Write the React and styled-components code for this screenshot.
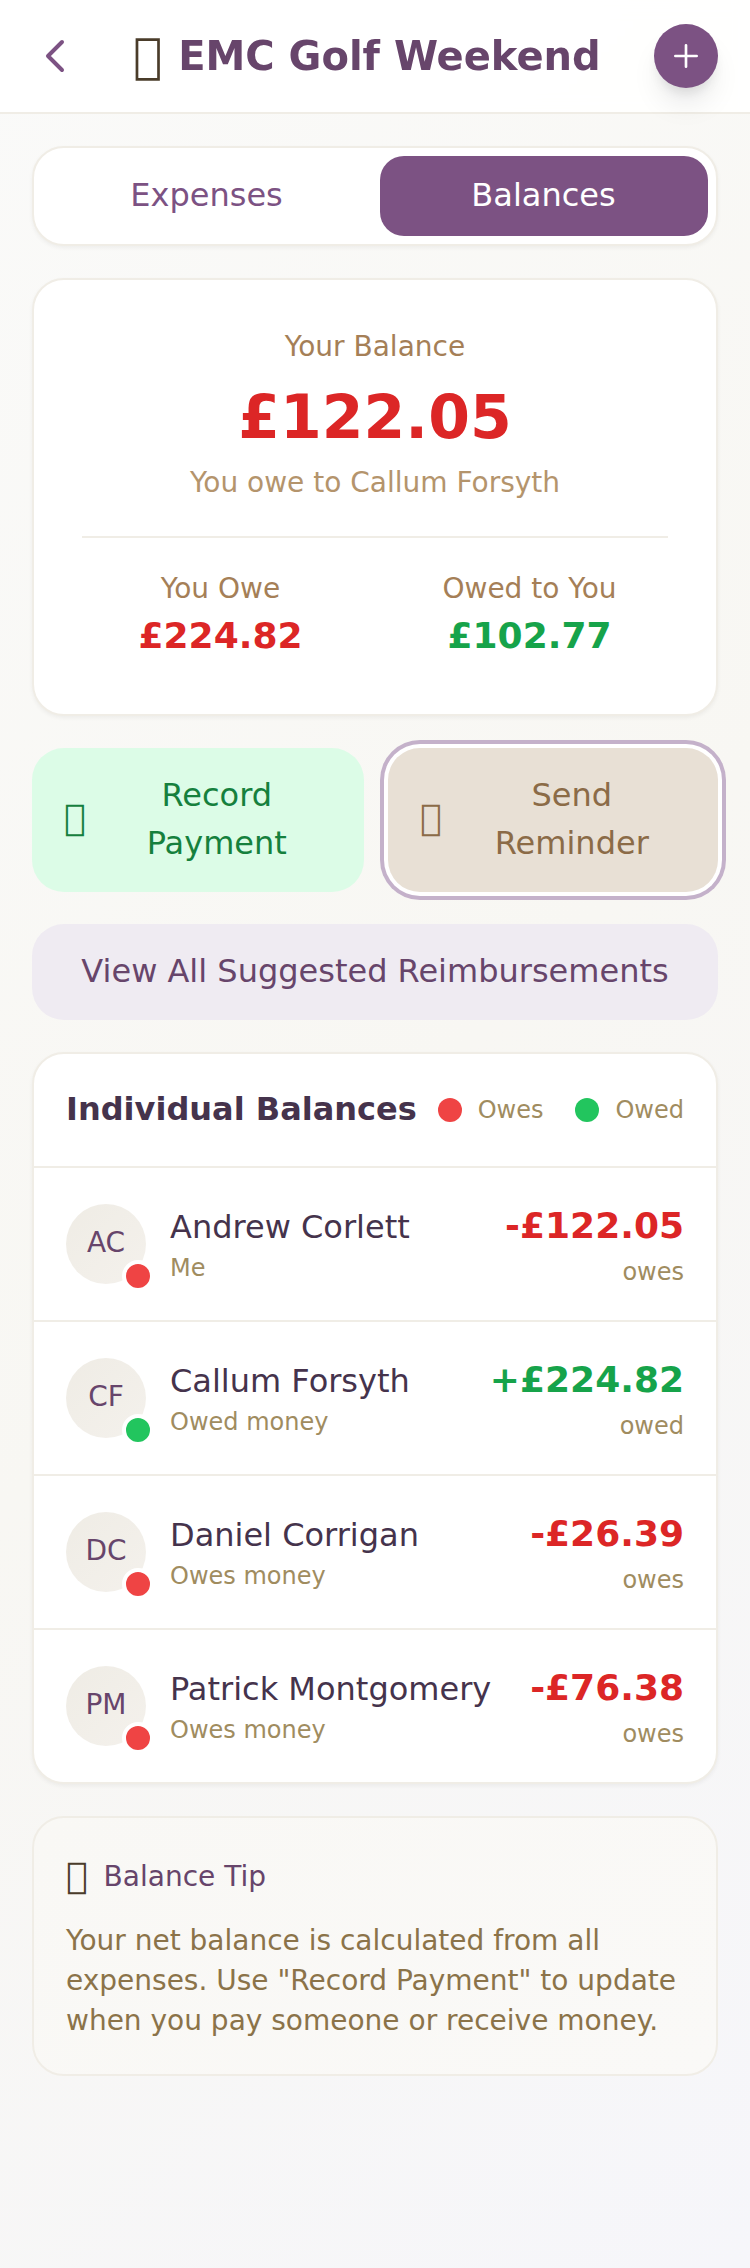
import React from "react";
import styled, { createGlobalStyle } from "styled-components";

const colors = {
  plum: "#7c5283",
  plumDeep: "#67456b",
  ink: "#45334c",
  tan: "#a57f57",
  tanLight: "#b4946c",
  olive: "#a08c5f",
  line: "#f0ede6",
  red: "#dc2626",
  green: "#16a34a",
  redDot: "#ef4444",
  greenDot: "#22c55e",
};

const GlobalStyle = createGlobalStyle`
  *, *::before, *::after { box-sizing: border-box; }
  body {
    margin: 0;
    font-family: "DejaVu Sans", sans-serif;
    color: #4a3c2a;
  }
  button { font: inherit; color: inherit; border: 0; margin: 0; cursor: pointer; }
  h1, h2, p { margin: 0; }
`;

const Screen = styled.div`
  min-height: 2268px;
  background: linear-gradient(135deg, #fafaf9 0%, #f8f7f3 50%, #f6f6fa 100%);
`;

const Header = styled.header`
  height: 114px;
  padding: 0 32px;
  display: flex;
  align-items: center;
  justify-content: space-between;
  background: rgba(255, 255, 255, 0.9);
  border-bottom: 2px solid ${colors.line};
  backdrop-filter: blur(8px);
`;

const BackButton = styled.button`
  display: flex;
  padding: 0;
  background: none;
  color: ${colors.plum};
`;

const AddButton = styled.button`
  width: 64px;
  height: 64px;
  padding: 0;
  border-radius: 50%;
  display: flex;
  align-items: center;
  justify-content: center;
  background: ${colors.plum};
  color: #fff;
  box-shadow: 0 20px 30px -6px rgba(0, 0, 0, 0.1), 0 8px 12px -4px rgba(0, 0, 0, 0.1);
`;

const TitleGroup = styled.div`
  display: flex;
  align-items: center;
  gap: 16px;
`;

const Title = styled.h1`
  font-size: 40px;
  line-height: 56px;
  font-weight: 700;
  color: ${colors.plumDeep};
`;

const BoxGlyph = styled.span`
  margin-bottom: ${(p) => p.$lift}px;
  font-size: ${(p) => p.$size}px;
  line-height: ${(p) => p.$line}px;
`;

const Content = styled.main`
  padding: 32px;
  display: flex;
  flex-direction: column;
  gap: 32px;
`;

const Card = styled.section`
  background: #fff;
  border: 2px solid ${colors.line};
  border-radius: 32px;
  box-shadow: 0 2px 4px rgba(0, 0, 0, 0.05);
`;

const Tabs = styled(Card).attrs({ as: "nav" })`
  padding: 8px;
  display: grid;
  grid-template-columns: 330px 328px;
  gap: 8px;
`;

const Tab = styled.button`
  height: 80px;
  padding: 0 1px 2px 0;
  border-radius: 24px;
  font-size: 32px;
  line-height: 48px;
  background: ${(p) => (p.$active ? colors.plum : "transparent")};
  color: ${(p) => (p.$active ? "#fff" : colors.plum)};
`;

const BalanceCard = styled(Card)`
  height: 438px;
  padding: 48px;
  text-align: center;
`;

const Caption = styled.p`
  font-size: 28px;
  line-height: 37px;
  color: ${(p) => (p.$light ? colors.tanLight : colors.tan)};
`;

const NetAmount = styled.p`
  margin: 16px 0 11px;
  font-size: 60px;
  line-height: 72px;
  font-weight: 700;
  color: ${colors.red};
`;

const Split = styled.div`
  margin-top: 35px;
  padding-top: 32px;
  border-top: 2px solid ${colors.line};
  display: grid;
  grid-template-columns: 1fr 1fr;
  gap: 32px;
`;

const SplitAmount = styled.p`
  margin-top: 6px;
  font-size: 36px;
  line-height: 45px;
  font-weight: 700;
  color: ${(p) => (p.$positive ? colors.green : colors.red)};
`;

const Actions = styled.div`
  display: grid;
  grid-template-columns: 332px 330px;
  gap: 24px;
`;

const ActionButton = styled.button`
  height: 144px;
  padding: 23px 32px 25px;
  border-radius: 32px;
  display: flex;
  align-items: center;
  gap: 16px;
  font-size: 32px;
  line-height: 48px;
  background: ${(p) => (p.$tone === "green" ? "#dcfce7" : "#e8e0d5")};
  color: ${(p) => (p.$tone === "green" ? "#15803d" : "#8b6b47")};
  box-shadow: ${(p) => (p.$focused ? "0 0 0 4px #fff, 0 0 0 8px #c4b1ca" : "none")};
`;

const ActionLabel = styled.span`
  flex: 1;
  text-align: center;
`;

const WideButton = styled.button`
  height: 96px;
  padding: 0 0 2px;
  border-radius: 32px;
  font-size: 32px;
  line-height: 48px;
  background: #efebf2;
  color: ${colors.plumDeep};
`;

const ListHeader = styled.div`
  height: 112px;
  padding: 0 32px;
  display: flex;
  align-items: center;
  justify-content: space-between;
`;

const ListTitle = styled.h2`
  padding-bottom: 2px;
  font-size: 32px;
  line-height: 48px;
  font-weight: 700;
  color: ${colors.ink};
`;

const Legend = styled.div`
  display: flex;
  gap: 32px;
`;

const LegendItem = styled.div`
  display: flex;
  align-items: center;
  gap: 16px;
  font-size: 24px;
  line-height: 28px;
  color: ${colors.olive};
`;

const Dot = styled.span`
  width: 24px;
  height: 24px;
  border-radius: 50%;
  background: ${(p) => (p.$positive ? colors.greenDot : colors.redDot)};
`;

const Row = styled.div`
  height: 154px;
  padding: 35px 32px 0;
  border-top: 2px solid ${colors.line};
  display: flex;
  align-items: flex-start;
`;

const Avatar = styled.div`
  position: relative;
  width: 80px;
  height: 80px;
  margin: 1px 24px 0 0;
  padding-bottom: 3px;
  border-radius: 50%;
  display: flex;
  align-items: center;
  justify-content: center;
  font-size: 28px;
  line-height: 33px;
  background: linear-gradient(135deg, #efece5, #f4f1ec);
  color: ${colors.plumDeep};
`;

const StatusDot = styled.span`
  position: absolute;
  right: -8px;
  bottom: -8px;
  width: 32px;
  height: 32px;
  border: 4px solid #fff;
  border-radius: 50%;
  background: ${(p) => (p.$positive ? colors.greenDot : colors.redDot)};
`;

const Person = styled.div`
  flex: 1;
`;

const Name = styled.p`
  font-size: 32px;
  line-height: 48px;
  color: ${colors.ink};
  white-space: nowrap;
`;

const Note = styled.p`
  font-size: 24px;
  line-height: 34px;
  color: ${colors.olive};
`;

const Figures = styled.div`
  text-align: right;
`;

const RowAmount = styled.p`
  margin-bottom: 7px;
  font-size: 36px;
  line-height: 45px;
  font-weight: 700;
  color: ${(p) => (p.$positive ? colors.green : colors.red)};
`;

const TipCard = styled.section`
  height: 260px;
  padding: 32px;
  border: 2px solid ${colors.line};
  border-radius: 32px;
  background: linear-gradient(135deg, #f9f8f5, #faf9f7);
`;

const TipHeading = styled.div`
  height: 56px;
  display: flex;
  align-items: center;
  gap: 16px;
`;

const TipTitle = styled.h2`
  padding-bottom: 3px;
  font-size: 28px;
  line-height: 40px;
  font-weight: 400;
  color: ${colors.plumDeep};
`;

const TipText = styled.p`
  margin-top: 15px;
  font-size: 28px;
  line-height: 40px;
  color: #8b7349;
`;

const people = [
  { initials: "AC", name: "Andrew Corlett", note: "Me", amount: "-£122.05", status: "owes" },
  { initials: "CF", name: "Callum Forsyth", note: "Owed money", amount: "+£224.82", status: "owed" },
  { initials: "DC", name: "Daniel Corrigan", note: "Owes money", amount: "-£26.39", status: "owes" },
  { initials: "PM", name: "Patrick Montgomery", note: "Owes money", amount: "-£76.38", status: "owes" },
];

// Private-use code point: drawn as the font's empty box.
const BOX = "\u{F1000}";

function StrokeIcon({ size, d }) {
  return (
    <svg width={size} height={size} viewBox="0 0 24 24" fill="none" stroke="currentColor" strokeWidth="2" strokeLinecap="round" strokeLinejoin="round">
      <path d={d} />
    </svg>
  );
}

export default function App() {
  return (
    <Screen>
      <GlobalStyle />
      <Header>
        <BackButton aria-label="Back">
          <StrokeIcon size={48} d="M15 19l-7-7 7-7" />
        </BackButton>
        <TitleGroup>
          <BoxGlyph $size={48} $line={64} $lift={2}>{BOX}</BoxGlyph>
          <Title>EMC Golf Weekend</Title>
        </TitleGroup>
        <AddButton aria-label="Add">
          <StrokeIcon size={32} d="M12 4v16m8-8H4" />
        </AddButton>
      </Header>
      <Content>
        <Tabs>
          <Tab>Expenses</Tab>
          <Tab $active>Balances</Tab>
        </Tabs>

        <BalanceCard>
          <Caption>Your Balance</Caption>
          <NetAmount>£122.05</NetAmount>
          <Caption $light>You owe to Callum Forsyth</Caption>
          <Split>
            <div>
              <Caption>You Owe</Caption>
              <SplitAmount>£224.82</SplitAmount>
            </div>
            <div>
              <Caption>Owed to You</Caption>
              <SplitAmount $positive>£102.77</SplitAmount>
            </div>
          </Split>
        </BalanceCard>

        <Actions>
          <ActionButton $tone="green">
            <BoxGlyph $size={36} $line={56} $lift={3}>{BOX}</BoxGlyph>
            <ActionLabel>Record<br />Payment</ActionLabel>
          </ActionButton>
          <ActionButton $tone="sand" $focused>
            <BoxGlyph $size={36} $line={56} $lift={3}>{BOX}</BoxGlyph>
            <ActionLabel>Send<br />Reminder</ActionLabel>
          </ActionButton>
        </Actions>

        <WideButton>View All Suggested Reimbursements</WideButton>

        <Card>
          <ListHeader>
            <ListTitle>Individual Balances</ListTitle>
            <Legend>
              <LegendItem><Dot />Owes</LegendItem>
              <LegendItem><Dot $positive />Owed</LegendItem>
            </Legend>
          </ListHeader>
          {people.map((p) => {
            const positive = p.status === "owed";
            return (
              <Row key={p.initials}>
                <Avatar>
                  {p.initials}
                  <StatusDot $positive={positive} />
                </Avatar>
                <Person>
                  <Name>{p.name}</Name>
                  <Note>{p.note}</Note>
                </Person>
                <Figures>
                  <RowAmount $positive={positive}>{p.amount}</RowAmount>
                  <Note>{p.status}</Note>
                </Figures>
              </Row>
            );
          })}
        </Card>

        <TipCard>
          <TipHeading>
            <BoxGlyph $size={36} $line={56} $lift={5}>{BOX}</BoxGlyph>
            <TipTitle>Balance Tip</TipTitle>
          </TipHeading>
          <TipText>
            Your net balance is calculated from all expenses. Use "Record Payment" to update when you pay someone or receive money.
          </TipText>
        </TipCard>
      </Content>
    </Screen>
  );
}
